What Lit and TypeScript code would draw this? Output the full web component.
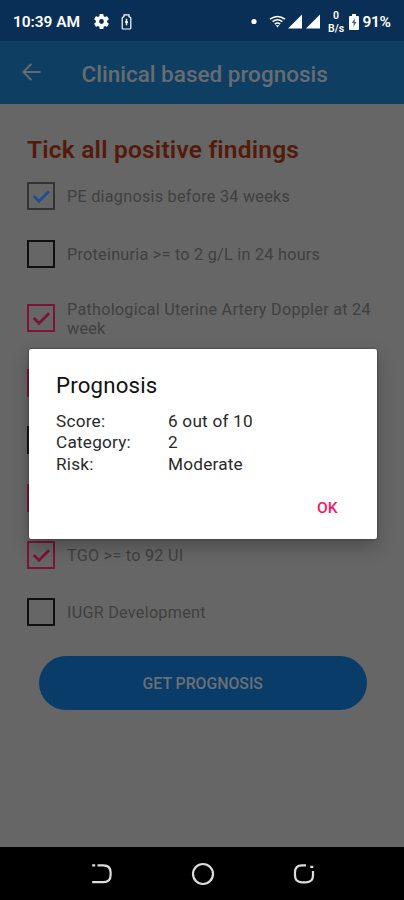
import { LitElement, html, css, svg } from "lit";
import { customElement, property } from "lit/decorators.js";

@customElement("finding-row")
class FindingRow extends LitElement {
  @property() kind = "empty";
  @property() label = "";

  static styles = css`
    :host { display: flex; align-items: center; height: 57.4px; gap: 12px; }
    svg { flex: none; width: 28px; height: 28px; display: block; fill: none; }
    .box { stroke-width: 2; }
    .tick { stroke-width: 2.8; }
    .empty { stroke: #101010; }
    .blue .box { stroke: #343434; }
    .blue .tick { stroke: #1b4f92; }
    .pink { stroke: #7b1439; }
    .label { width: 314px; padding-top: 1px; font: 400 16.2px/19px Roboto, sans-serif; letter-spacing: 0.26px; color: #404040; }
  `;

  render() {
    return html`
      <svg class=${this.kind} viewBox="0 0 28 28">
        <rect class="box" x="1" y="1" width="26" height="26"></rect>
        ${this.kind === "empty" ? "" : svg`<path class="tick" d="M6.8 14 L12 19.2 L22 9.2"></path>`}
      </svg>
      <div class="label">${this.label}</div>
    `;
  }
}

@customElement("app-root")
class AppRoot extends LitElement {
  static styles = css`
    :host { display: flex; flex-direction: column; position: relative; width: 404px; height: 900px; background: #666; font-family: Roboto, sans-serif; overflow: hidden; }
    svg { display: block; flex: none; }
    .status { height: 41px; background: #0a2f57; color: #fff; display: flex; align-items: center; box-sizing: border-box; padding: 2px 11px 0 13px; font-size: 15.5px; font-weight: 600; }
    .clock { width: 69px; white-space: nowrap; margin-right: 12px; letter-spacing: -0.05px; }
    .battery-outline { margin-left: 12px; }
    .right { margin-left: auto; display: flex; align-items: center; }
    .signals { margin-right: -1px; }
    .rate { width: 17px; text-align: center; font-size: 10.5px; line-height: 13px; margin: 0 4px 0 7.5px; }
    .percent { font-size: 15.5px; margin-left: 4px; width: 30.5px; letter-spacing: -0.3px; }
    .bar { height: 63px; background: #0e3f63; display: flex; align-items: center; box-sizing: border-box; padding: 0 0 0 22px; color: #686c70; }
    .bar svg { margin-top: -2px; }
    .title { margin: 2px 0 0 40.5px; font-size: 22.5px; font-weight: 500; line-height: 28px; }
    .content { flex: 1; padding: 30px 0 0 27px; }
    h1 { margin: 0; font-size: 24.5px; line-height: 31px; font-weight: 600; letter-spacing: 0.2px; color: #541a0a; height: 33.8px; white-space: nowrap; }
    .tall { height: 71.6px; }
    .button { margin: 15px 0 0 12px; width: 327.5px; height: 53.5px; border-radius: 27px; background: #0a3c69; color: #6b7075; font-size: 15.8px; font-weight: 500; display: flex; align-items: center; justify-content: center; box-sizing: border-box; padding-top: 1px; }
    .nav { height: 53px; background: #000; display: flex; align-items: center; justify-content: center; gap: 78px; padding-left: 1px; }
    .dialog { position: absolute; left: 28.5px; top: 348.5px; width: 348.5px; height: 190px; box-sizing: border-box; padding: 21px 27.5px 0; border-radius: 2px; background: #fff; color: #111; box-shadow: 0 0 2px #222, 0 8px 18px rgba(0,0,0,.25); }
    h2 { margin: 0; font-size: 22.2px; line-height: 30px; font-weight: 400; letter-spacing: 0.2px; }
    .facts { margin-top: 11px; display: grid; grid-template-columns: 112px 1fr; font-size: 17.2px; line-height: 21.5px; letter-spacing: 0.22px; color: #2a2a2a; }
    .ok { display: flex; justify-content: flex-end; margin: 22.5px 12px 0 0; color: #ef1765; font-size: 15.5px; font-weight: 500; line-height: 20px; }
  `;

  render() {
    return html`
      <div class="status">
        <span class="clock">10:39 AM</span>
        <svg width="15" height="15" viewBox="2 2 20 20" fill="#fff"><path d="M19.43 12.98c.04-.32.07-.64.07-.98s-.03-.66-.07-.98l2.11-1.65c.19-.15.24-.42.12-.64l-2-3.46c-.12-.22-.39-.3-.61-.22l-2.49 1c-.52-.4-1.08-.73-1.69-.98l-.38-2.65A.49.49 0 0 0 14 2h-4c-.25 0-.46.18-.49.42l-.38 2.65c-.61.25-1.17.59-1.69.98l-2.49-1c-.23-.09-.49 0-.61.22l-2 3.46c-.13.22-.07.49.12.64l2.11 1.65c-.04.32-.07.65-.07.98s.03.66.07.98l-2.11 1.65c-.19.15-.24.42-.12.64l2 3.46c.12.22.39.3.61.22l2.49-1c.52.4 1.08.73 1.69.98l.38 2.65c.03.24.24.42.49.42h4c.25 0 .46-.18.49-.42l.38-2.65c.61-.25 1.17-.59 1.69-.98l2.49 1c.23.09.49 0 .61-.22l2-3.46c.12-.22.07-.49-.12-.64zM12 15.2a3.2 3.2 0 1 1 0-6.4 3.2 3.2 0 0 1 0 6.4z"></path></svg>
        <svg class="battery-outline" width="11" height="16" viewBox="0 0 11 16" fill="none" stroke="#fff" stroke-width="1.2"><path d="M3 2.6V.8h5v1.8l1.8 1.2v10.2q0 1-1 1H2.2q-1 0-1-1V3.8z"></path><path d="M5.5 4.8v6.5M4 8h3" stroke-width="1.5"></path></svg>
        <div class="right">
          <svg class="signals" width="70" height="18" viewBox="0 0 70 18" fill="#fff">
            <circle cx="3" cy="8.5" r="2.6"></circle>
            <g fill="none" stroke="#fff" stroke-width="1.6"><path d="M19 6.2Q26.5.7 34 6.2M21.6 8.6Q26.5 5 31.4 8.6M23.8 11Q26.5 9 29.2 11"></path></g>
            <path d="M24.6 12.2h3.8l-1.9 2.4z"></path>
            <path d="M37 15.5h14V1.5zM55 15.5h14V1.5z"></path>
          </svg>
          <div class="rate">0<br>B/s</div>
          <svg width="10" height="16" viewBox="0 0 10 16"><path fill="#fff" d="M3 0h4v2h2q1 0 1 1v12q0 1-1 1H1q-1 0-1-1V3q0-1 1-1h2z"></path><path fill="#0a2f57" d="M5.8 4.2 2.8 9h1.8v3.8L7.4 8H5.7z" opacity=".75"></path></svg>
          <span class="percent">91%</span>
        </div>
      </div>
      <div class="bar">
        <svg width="19" height="18" viewBox="0 0 19 18" fill="none" stroke="#666a6e" stroke-width="2"><path d="M18.5 9H1.5M9.3 1 1.3 9l8 8"></path></svg>
        <div class="title">Clinical based prognosis</div>
      </div>
      <div class="content">
        <h1>Tick all positive findings</h1>
        <finding-row kind="blue" label="PE diagnosis before 34 weeks"></finding-row>
        <finding-row label="Proteinuria >= to 2 g/L in 24 hours"></finding-row>
        <finding-row class="tall" kind="pink" label="Pathological Uterine Artery Doppler at 24 week"></finding-row>
        <finding-row kind="pink"></finding-row>
        <finding-row></finding-row>
        <finding-row kind="pink"></finding-row>
        <finding-row kind="pink" label="TGO >= to 92 UI"></finding-row>
        <finding-row label="IUGR Development"></finding-row>
        <div class="button">GET PROGNOSIS</div>
      </div>
      <div class="nav">
        <svg width="22" height="24" viewBox="0 0 22 24" fill="none" stroke="#ddd" stroke-width="2.2"><path d="M1.2 3.3h3M6.5 3.3h5.8q7.3 0 7.3 7.2v2.5q0 7.2-7.3 7.2H1.2"></path></svg>
        <svg width="24" height="24" viewBox="0 0 24 24" fill="none" stroke="#ddd" stroke-width="2.2"><circle cx="12" cy="12" r="10"></circle></svg>
        <svg width="22" height="24" viewBox="0 0 22 24" fill="none" stroke="#ddd" stroke-width="2.2"><path d="M13 3.3H9q-7 0-7 7v3q0 7 7 7h4q7 0 7-7V9M17.3 4.8h3"></path></svg>
      </div>
      <div class="dialog">
        <h2>Prognosis</h2>
        <div class="facts">
          <span>Score:</span><span>6 out of 10</span>
          <span>Category:</span><span>2</span>
          <span>Risk:</span><span>Moderate</span>
        </div>
        <div class="ok">OK</div>
      </div>
    `;
  }
}
